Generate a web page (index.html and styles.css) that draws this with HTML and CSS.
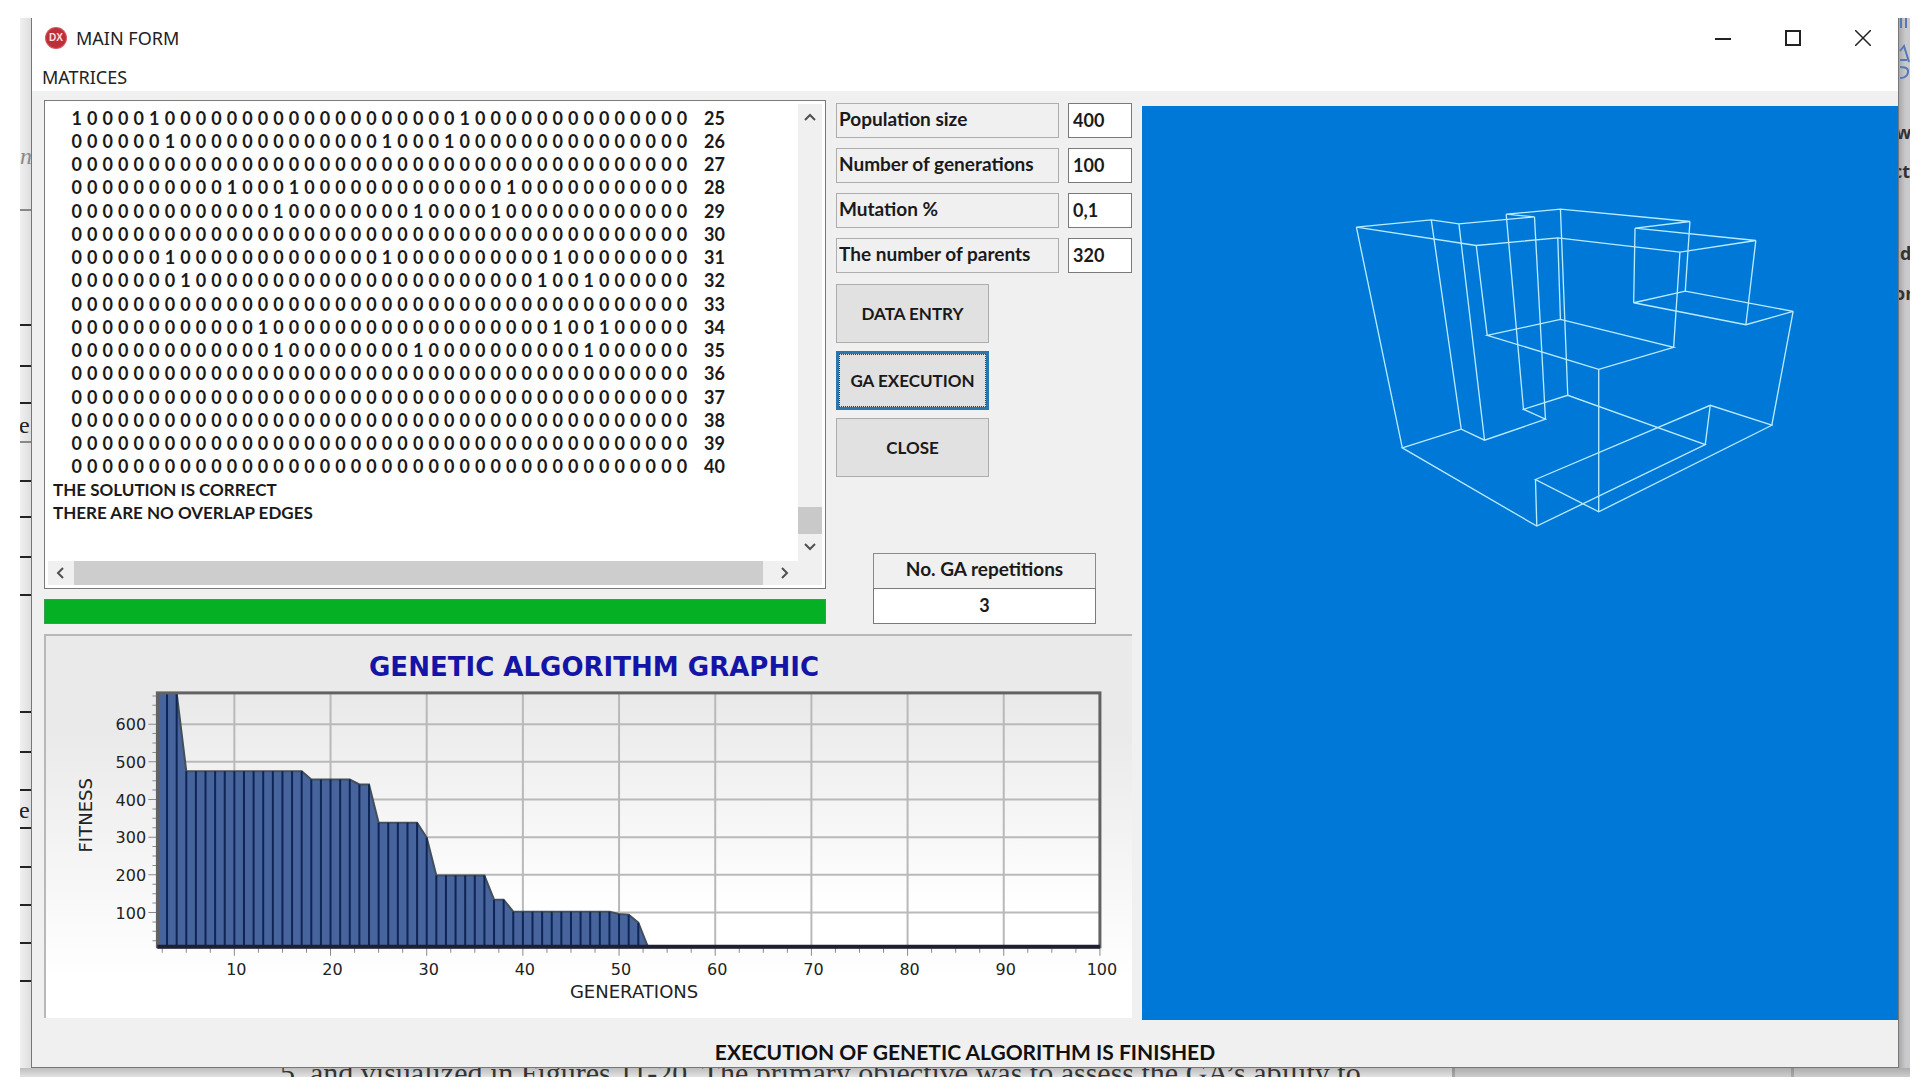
FILE: index.html
```html
<!DOCTYPE html>
<html lang="en">
<head>
<meta charset="utf-8">
<title>MAIN FORM</title>
<link rel="stylesheet" href="styles.css">
</head>
<body>
<div class="desktop">
  <svg class="edge edge-left" viewBox="0 0 11 1050" preserveAspectRatio="xMinYMin slice" aria-hidden="true">
    <path class="rule-soft" d="M0 192H11M0 424H11"/>
    <path class="rule" d="M0 307H11M0 348H11M0 385H11M0 463H11M0 499H11M0 539H11M0 577H11M0 694H11M0 734H11M0 772H11M0 810H11M0 849H11M0 887H11M0 925H11M0 963H11"/>
    <text class="scrap scrap-italic" x="0" y="146">n</text>
    <text class="scrap" x="-1" y="415">e</text>
    <text class="scrap" x="-1" y="800">e</text>
  </svg>

  <main class="window">
    <header class="titlebar">
      <svg class="app-icon" viewBox="0 0 24 24" aria-hidden="true">
        <circle cx="12" cy="12" r="11" fill="#cf5a60"/>
        <circle cx="12" cy="12" r="10" fill="#bd2f38"/>
        <text x="12" y="15" text-anchor="middle" class="icon-text">DX</text>
      </svg>
      <h1 class="title">MAIN FORM</h1>
      <div class="caption-buttons">
        <button type="button" aria-label="Minimize"><svg viewBox="0 0 16 16"><path d="M0 9H16"/></svg></button>
        <button type="button" aria-label="Maximize"><svg viewBox="0 0 16 16"><path d="M1 1H15V15H1Z"/></svg></button>
        <button type="button" aria-label="Close"><svg viewBox="0 0 16 16"><path class="thin" d="M0 0L16 16M16 0L0 16"/></svg></button>
      </div>
    </header>
    <nav class="menubar"><a href="#matrices">MATRICES</a></nav>

    <div class="workspace">
      <div class="left">
        <div class="upper">
          <div class="output">
            <section class="memo" id="matrices">
              <div class="memo-text">
                <table class="matrix"><tbody id="matrix-rows"></tbody></table>
                <p>THE SOLUTION IS CORRECT</p>
                <p>THERE ARE NO OVERLAP EDGES</p>
              </div>
              <div class="vscroll">
                <svg class="arrow" viewBox="0 0 12 12"><path d="M1 9L6 4L11 9"/></svg>
                <div class="vthumb"></div>
                <svg class="arrow" viewBox="0 0 12 12"><path d="M1 3L6 8L11 3"/></svg>
              </div>
              <div class="hscroll">
                <svg class="arrow" viewBox="0 0 12 12"><path d="M9 1L4 6L9 11"/></svg>
                <div class="hthumb"></div>
                <svg class="arrow" viewBox="0 0 12 12"><path d="M3 1L8 6L3 11"/></svg>
              </div>
            </section>
            <div class="progress" role="progressbar" aria-label="Progress" aria-valuenow="100"></div>
          </div>

          <form class="controls">
            <div class="params">
              <label for="population">Population size</label><input id="population" value="400">
              <label for="generations">Number of generations</label><input id="generations" value="100">
              <label for="mutation">Mutation %</label><input id="mutation" value="0,1">
              <label for="parents">The number of parents</label><input id="parents" value="320">
            </div>
            <div class="actions">
              <button type="button">DATA ENTRY</button>
              <button type="button" class="focused">GA EXECUTION</button>
              <button type="button">CLOSE</button>
            </div>
            <div class="repeats">
              <label for="repeats">No. GA repetitions</label>
              <input id="repeats" value="3">
            </div>
          </form>
        </div>

        <section class="chart">
          <svg id="chart" viewBox="0 0 1084 381" role="img" aria-label="Genetic algorithm graphic">
            <g id="plot"></g>
            <text class="chart-title" x="547" y="40" text-anchor="middle">GENETIC ALGORITHM GRAPHIC</text>
            <text class="axis-title" x="587" y="361" text-anchor="middle">GENERATIONS</text>
            <text class="axis-title" transform="translate(46 179) rotate(-90)" text-anchor="middle">FITNESS</text>
          </svg>
        </section>
      </div>

      <section class="canvas">
        <svg viewBox="0 0 757 914" preserveAspectRatio="xMidYMin meet" role="img" aria-label="Wireframe solid">
          <g transform="translate(198 83) scale(.33333)">
            <path d="M50 115L275 93L358 105L585 84L500 76L663 61L1052 98L887 118L1250 155L1022 190L655 147L410 170Z"/>
            <path d="M50 115L188 778M275 93L365 722M358 105L435 755M500 76L552 662M585 84L618 692M663 61L685 620M410 170L443 440M655 147L663 392M1022 190L1003 476M1052 98L1038 307M887 118L883 342M1250 155L1220 408"/>
            <path d="M443 440L663 392L1003 476L778 542ZM883 342L1038 307L1362 368L1220 408Z"/>
            <path d="M1362 368L1298 710M778 542V970M592 1013L588 873M1098 768L1113 650"/>
            <path d="M188 778L365 722L435 755L618 692L552 662L685 620L1098 768L592 1013ZM588 873L1113 650L1298 710L778 970Z"/>
          </g>
        </svg>
      </section>
    </div>

    <footer class="status">EXECUTION OF GENETIC ALGORITHM IS FINISHED</footer>
  </main>

  <svg class="edge edge-right" viewBox="0 0 11 1050" preserveAspectRatio="xMinYMin slice" aria-hidden="true">
    <path class="blue" d="M2 0V10M7 0V10M1 33L5 28L10 44M1 42H8M1 49Q12 49 8 57Q6 60 1 60"/>
    <text class="scrap scrap-bold" x="-3" y="121">w</text>
    <text class="scrap scrap-bold" x="-6" y="160">ct</text>
    <text class="scrap scrap-bold" x="1" y="242">d</text>
    <text class="scrap scrap-bold" x="-5" y="282">or</text>
  </svg>
  <div class="page-below"><p>5, and visualized in Figures 11-20. The primary objective was to assess the GA’s ability to</p></div>
</div>
<script src="app.js"></script>
</body>
</html>
```
FILE: styles.css
```css
* { box-sizing: border-box; }

body {
  margin: 0;
  background: #fff;
  color: #1a1a1a;
  font: bold 17px/23px Lato, "Open Sans", sans-serif;
}

p { margin: 0; }

.desktop {
  display: grid;
  grid-template-columns: 11px minmax(0, 1fr) 11px;
  grid-template-rows: 1fr 9px;
  min-height: 100vh;
  padding: 18px 15px 14px 20px;
}

.edge { width: 11px; height: 100%; display: block; overflow: hidden; }
.edge-left { background: linear-gradient(90deg, #f0f0f0, #dedede); }
.edge-right { background: linear-gradient(90deg, #a8a8aa, #cacacc 60%); }
.rule { stroke: #222; stroke-width: 2; }
.rule-soft { stroke: #888; stroke-width: 2; }
.blue { stroke: #5478b8; stroke-width: 2; fill: none; }
.scrap { font: 24px "Liberation Serif", serif; fill: #222; }
.scrap-italic { font-style: italic; fill: #888; }
.scrap-bold { font: bold 18px "Open Sans", sans-serif; fill: #333; }

.page-below {
  grid-column: 1 / -1;
  height: 9px;
  overflow: hidden;
  padding-left: 260px;
  background:
    linear-gradient(rgba(0, 0, 0, .16), rgba(0, 0, 0, 0)),
    linear-gradient(90deg, #e2e2e2 1432px, #aaa 1432px, #aaa 1435px, #cdcdcd 1435px, #cdcdcd 1771px, #aaa 1771px, #aaa 1774px, #cdcdcd 1774px);
  color: #333;
  font: 30px/9px "Liberation Serif", serif;
  white-space: nowrap;
}

.window {
  display: flex;
  flex-direction: column;
  min-width: 0;
  background: #f0f0f0;
  border: 1px solid #777;
  border-top: 0;
}

.titlebar {
  display: flex;
  align-items: center;
  height: 40px;
  padding-left: 12px;
  gap: 8px;
  background: #fff;
}
.app-icon { width: 24px; height: 24px; }
.icon-text { font: bold 10px "Liberation Sans", sans-serif; fill: #fae0e0; }
.title, .menubar a { font: 18px/24px "Noto Sans", sans-serif; color: #222; text-decoration: none; }
.title { margin: 0; }
.caption-buttons { display: flex; margin-left: auto; }
.caption-buttons button {
  display: grid;
  place-items: center;
  width: 70px;
  height: 40px;
  padding: 0;
  border: 0;
  background: none;
}
.caption-buttons svg { width: 16px; height: 16px; fill: none; stroke: #222; stroke-width: 2; }
.caption-buttons .thin { stroke-width: 1.5; }

.menubar { height: 33px; padding: 7px 10px 2px; background: #fff; }
.menubar a { display: block; }

.workspace {
  display: grid;
  grid-template-columns: 1110fr 756fr;
  flex: 1;
}
.left { padding: 9px 10px 2px 12px; }

.upper {
  display: grid;
  grid-template-columns: minmax(0, 1fr) 296px;
  gap: 10px;
}

.memo {
  display: grid;
  grid-template-columns: minmax(0, 1fr) 24px;
  grid-template-rows: 1fr 24px;
  height: 489px;
  padding: 3px;
  background: #fff;
  border: 1px solid #7a7a7a;
}
.memo-text { padding: 2px 5px; overflow: hidden; }
.matrix {
  table-layout: fixed;
  width: 656px;
  height: 372px;
  margin-left: 16px;
  border-spacing: 0;
}
.matrix td, .matrix th { padding: 0; text-align: center; font-size: 18px; line-height: 20px; }
.matrix th { width: 35px; text-align: right; font-weight: bold; }

.vscroll, .hscroll { display: flex; align-items: center; background: #f0f0f0; }
.vscroll { flex-direction: column; padding: 7px 0 8px; }
.vthumb { width: 24px; height: 27px; margin: auto 0 7px; background: #c9c9c9; }
.hscroll { grid-column: 1 / -1; padding: 0 31px 0 6px; }
.hthumb { flex: 1; height: 24px; margin: 0 16px 0 8px; background: #cdcdcd; }
.arrow { width: 12px; height: 12px; fill: none; stroke: #505050; stroke-width: 2; }

.progress { height: 25px; margin-top: 10px; background: #06b025; border: 1px solid #3a9c4c; }

.controls { display: flex; flex-direction: column; padding-top: 3px; }
.params {
  display: grid;
  grid-template-columns: 1fr 64px;
  gap: 10px 9px;
}
.params label, .repeats label {
  height: 35px;
  padding: 3px 2px;
  border: 1px solid #adadad;
  font-size: 19px;
  white-space: nowrap;
}
.params input, .repeats input {
  width: 100%;
  height: 35px;
  padding: 0 4px 2px;
  background: #fff;
  border: 1px solid #7a7a7a;
  border-radius: 0;
  color: inherit;
  font: inherit;
  font-size: 18px;
}
.actions { display: grid; gap: 8px; width: 153px; margin-top: 11px; }
.actions button {
  height: 59px;
  padding: 0;
  background: #e1e1e1;
  border: 1px solid #adadad;
  color: inherit;
  font: inherit;
}
.actions .focused {
  border: 3px solid #2a76ad;
  outline: 1px dotted #1c3f5c;
  outline-offset: -4px;
}
.repeats { display: grid; width: 223px; margin: auto 36px 0 auto; }
.repeats label { border-color: #8a8a8a; border-bottom: 0; text-align: center; }
.repeats input { height: 36px; text-align: center; }

.chart {
  margin: 10px 0 0;
  border-top: 2px solid #b8b8b8;
  border-left: 2px solid #b8b8b8;
  background: linear-gradient(#eaeaea 25%, #fff 90%);
}
.chart svg { display: block; width: 100%; height: auto; }
.chart text { font: 16px "DejaVu Sans", sans-serif; fill: #222; }
.chart .axis-title { font-size: 18px; }
.chart .chart-title { font: bold 26px "DejaVu Sans", sans-serif; fill: #1414a8; }
.area { fill: #47659c; stroke: #444f5c; stroke-width: 2; }
.bars { stroke: #0e2557; stroke-width: 2; }
.grid { stroke: #b9b9b9; stroke-width: 2; }
.ticks { stroke: #8a8a8a; stroke-width: 1; }
.plot-back { fill: url(#plot-fade); }
.plot-frame { fill: none; stroke: #626262; stroke-width: 3; }
.baseline { stroke: #1c2030; stroke-width: 4; }

.canvas { margin-top: 15px; background: #0078d7; }
.canvas svg { display: block; width: 100%; height: auto; }
.canvas path { fill: none; stroke: #b8ecff; stroke-width: 4; }

.status {
  padding: 20px 0 4px;
  color: #111;
  font-size: 21px;
  text-align: center;
}
```
FILE: app.js
```js
(() => {
  // Positions of the ones in each row of the adjacency matrix.
  const ones = {
    25: [0, 5, 25], 26: [6, 20, 24], 28: [10, 14, 28], 29: [13, 22, 27],
    31: [6, 20, 31], 32: [7, 30, 33], 34: [12, 31, 34], 35: [13, 22, 33]
  };
  let rows = "";
  for (let r = 25; r <= 40; r++) {
    rows += "<tr>";
    for (let c = 0; c < 40; c++) rows += "<td>" + ((ones[r] || []).includes(c) ? 1 : 0) + "</td>";
    rows += "<th scope=\"row\">" + r + "</th></tr>";
  }
  document.getElementById("matrix-rows").innerHTML = rows;

  // Best fitness per generation, as [last generation, value] steps.
  const steps = [[4, 683], [17, 475], [22, 453], [24, 440], [29, 338], [30, 299], [36, 198], [38, 134], [49, 102], [50, 96], [51, 94], [52, 73], [53, 9]];
  const x = g => 188 + (g - 10) * 9.6;
  const y = v => 276 - (v - 100) * 0.376;
  const fitness = g => steps.find(s => g <= s[0])[1];
  const left = x(2), right = x(100), top = y(683), bottom = y(9);

  let outline = `M${left} ${bottom}`, bars = "", grid = "", ticks = "", labels = "";
  for (let g = 2; g <= 53; g++) {
    outline += `L${x(g)} ${y(fitness(g))}`;
    bars += `M${x(g)} ${y(fitness(g))}V${bottom}`;
  }
  for (let g = 10; g <= 100; g += 10) {
    if (g < 100) grid += `M${x(g)} ${top}V${bottom}`;
    labels += `<text x="${x(g) + 2}" y="338" text-anchor="middle">${g}</text>`;
  }
  for (let v = 100; v <= 600; v += 100) {
    grid += `M${left} ${y(v)}H${right}`;
    labels += `<text x="100" y="${y(v) + 6}" text-anchor="end">${v}</text>`;
  }
  for (let g = 2.5; g <= 100; g += 2.5) ticks += `M${x(g)} ${bottom}v${g % 10 ? 6 : 9}`;
  for (let v = 25; v <= 675; v += 25) ticks += `M${left} ${y(v)}h${v % 100 ? -5 : -9}`;

  document.getElementById("plot").innerHTML = `
    <defs><linearGradient id="plot-fade" x2="0" y2="1"><stop offset="0" stop-color="#e9e9e9"/><stop offset=".85" stop-color="#fff"/></linearGradient></defs>
    <rect class="plot-back" x="${left}" y="${top}" width="${right - left}" height="${bottom - top}"/>
    <path class="ticks" d="${ticks}"/>
    <path class="grid" d="${grid}"/>
    <path class="area" d="${outline}Z"/>
    <path class="bars" d="${bars}"/>
    <rect class="plot-frame" x="${left}" y="${top}" width="${right - left}" height="${bottom - top}"/>
    <path class="baseline" d="M${left} ${bottom}H${right}"/>
    ${labels}`;
})();
```
